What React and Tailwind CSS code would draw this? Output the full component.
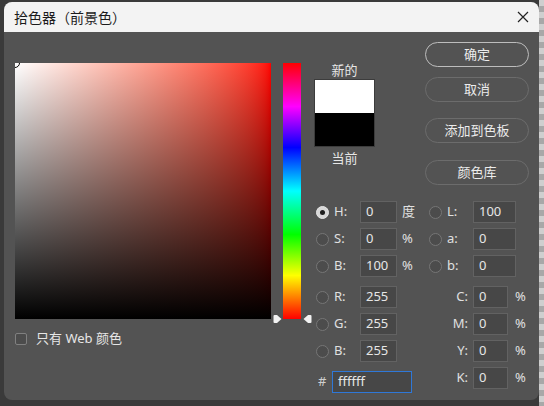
import React from 'react';

const font = { fontFamily: '"Noto Sans", "Noto Sans CJK SC", sans-serif' };

const Radio = ({ checked }) => (
  <div
    className={`w-[13px] h-[13px] rounded-full shrink-0 flex items-center justify-center border ${
      checked ? 'bg-[#d8d8d8] border-[#e6e6e6]' : 'bg-[#4c4c4c] border-[#767676]'
    }`}
  >
    {checked && <div className="w-[5px] h-[5px] rounded-full bg-[#1e1e1e]" />}
  </div>
);

const Field = ({ value, w = 'w-[37px]', blue }) => (
  <div
    className={`${w} h-[22px] shrink-0 flex items-center pl-[5px] text-[13px] text-[#e6e6e6] bg-[#474747] border ${
      blue ? 'border-[#2f78d8]' : 'border-[#626262]'
    }`}
  >
    {value}
  </div>
);

const LeftRow = ({ label, value, unit, checked }) => (
  <div className="h-[22px] flex items-center">
    <div className="ml-[2px]">
      <Radio checked={checked} />
    </div>
    <span className="ml-[5px] w-[26px] text-[13px] text-[#e0e0e0]">{label}</span>
    <Field value={value} />
    {unit && <span className="ml-[5px] text-[13px] text-[#e0e0e0]">{unit}</span>}
  </div>
);

const LabRow = ({ label, value }) => (
  <div className="h-[22px] flex items-center">
    <div className="ml-[2px]">
      <Radio />
    </div>
    <span className="ml-[5px] w-[26px] text-[13px] text-[#e0e0e0]">{label}</span>
    <Field value={value} w="w-[43px]" />
  </div>
);

const CmykRow = ({ label, value }) => (
  <div className="h-[22px] flex items-center">
    <span className="w-[41px] text-right text-[13px] text-[#e0e0e0]">{label}</span>
    <div className="ml-[5px]">
      <Field value={value} w="w-[35px]" />
    </div>
    <span className="ml-[7px] text-[13px] text-[#e0e0e0]">%</span>
  </div>
);

const Btn = ({ children, primary, className = '' }) => (
  <div
    className={`h-[25px] w-[104px] rounded-full flex items-center justify-center text-[13px] text-[#ececec] ${
      primary ? 'border-[1.5px] border-[#bdbdbd]' : 'border border-[#6c6c6c]'
    } ${className}`}
  >
    {children}
  </div>
);

const Arrow = ({ dir }) => (
  <svg width="9" height="10" viewBox="0 0 9 10">
    {dir === 'right' ? (
      <path d="M1.5 1 L4 1 L8.5 5 L4 9 L1.5 9 Q0.5 9 0.5 8 L0.5 2 Q0.5 1 1.5 1 Z" fill="#f2f2f2" />
    ) : (
      <path d="M7.5 1 L5 1 L0.5 5 L5 9 L7.5 9 Q8.5 9 8.5 8 L8.5 2 Q8.5 1 7.5 1 Z" fill="#f2f2f2" />
    )}
  </svg>
);

export default function App() {
  return (
    <div className="w-[544px] h-[406px] bg-[#3a3a3a] flex relative overflow-hidden" style={font}>
      <div className="absolute right-0 top-0 w-[5px] h-full bg-[repeating-linear-gradient(to_bottom,#cfcfcf_0px,#cfcfcf_6px,#a8a8a8_6px,#a8a8a8_12px)]" />
      <div className="ml-[4px] mt-[2px] w-[535px] h-[398px] rounded-lg overflow-hidden bg-[#535353] flex flex-col relative">
        {/* title bar */}
        <div className="h-[30px] bg-[#f3f3f3] flex items-center justify-between pl-[10px] pr-[10px] shrink-0">
          <span className="text-[14px] text-[#1b1b1b]">拾色器（前景色）</span>
          <svg width="12" height="12" viewBox="0 0 12 12">
            <path d="M1 1 L11 11 M11 1 L1 11" stroke="#222" strokeWidth="1.2" />
          </svg>
        </div>

        {/* body */}
        <div className="flex items-start pt-[10px] pl-[11px]">
          {/* color field */}
          <div className="mt-[21px] flex flex-col">
            <div className="w-[256px] h-[256px] bg-linear-to-r from-white to-[#ff0000] relative overflow-hidden">
              <div className="absolute inset-0 bg-linear-to-t from-black to-transparent" />
              <div className="absolute -left-[5px] -top-[5px] w-[10px] h-[10px] rounded-full border-[1.5px] border-black" />
            </div>
            <div className="mt-[13px] h-[14px] flex items-center">
              <div className="w-[12px] h-[12px] rounded-[2px] border border-[#808080] bg-[#4c4c4c]" />
              <span className="ml-[9px] text-[13px] text-[#e6e6e6]">只有 Web 颜色</span>
            </div>
          </div>

          {/* hue slider */}
          <div className="ml-[12px] mt-[21px] w-[18px] h-[256px] relative bg-[linear-gradient(to_bottom,#ff0000,#ff00ff_17%,#0000ff_33%,#00ffff_50%,#00ff00_67%,#ffff00_83%,#ff0000)]">
            <div className="absolute -left-[10px] bottom-[-5px]">
              <Arrow dir="right" />
            </div>
            <div className="absolute -right-[11px] bottom-[-5px]">
              <Arrow dir="left" />
            </div>
          </div>

          {/* right area */}
          <div className="ml-[13px] w-[215px] flex flex-col">
            <div className="h-[159px] flex items-start">
              <div className="mt-[21px] w-[61px] flex flex-col items-center">
                <div className="h-[14px] leading-[14px] text-[13px] text-[#e6e6e6]">新的</div>
                <div className="mt-[2px] w-[61px] h-[68px] border border-[#3c3c3c] flex flex-col">
                  <div className="flex-1 bg-white" />
                  <div className="flex-1 bg-black" />
                </div>
                <div className="mt-[4px] h-[14px] leading-[14px] text-[13px] text-[#e6e6e6]">当前</div>
              </div>
              <div className="ml-[50px] flex flex-col">
                <Btn primary>确定</Btn>
                <Btn className="mt-[10px]">取消</Btn>
                <Btn className="mt-[16px]">添加到色板</Btn>
                <Btn className="mt-[17px]">颜色库</Btn>
              </div>
            </div>

            <div className="flex">
              <div className="w-[113px] flex flex-col">
                <div className="flex flex-col gap-[5px]">
                  <LeftRow label="H:" value="0" unit="度" checked />
                  <LeftRow label="S:" value="0" unit="%" />
                  <LeftRow label="B:" value="100" unit="%" />
                </div>
                <div className="mt-[9px] flex flex-col gap-[5px]">
                  <LeftRow label="R:" value="255" />
                  <LeftRow label="G:" value="255" />
                  <LeftRow label="B:" value="255" />
                </div>
                <div className="mt-[9px] h-[22px] flex items-center">
                  <span className="ml-[4px] w-[14px] text-[13px] text-[#cfcfcf]">#</span>
                  <Field value="ffffff" w="w-[80px]" blue />
                </div>
              </div>
              <div className="flex flex-col">
                <div className="flex flex-col gap-[5px]">
                  <LabRow label="L:" value="100" />
                  <LabRow label="a:" value="0" />
                  <LabRow label="b:" value="0" />
                </div>
                <div className="mt-[9px] flex flex-col gap-[5px]">
                  <CmykRow label="C:" value="0" />
                  <CmykRow label="M:" value="0" />
                  <CmykRow label="Y:" value="0" />
                  <CmykRow label="K:" value="0" />
                </div>
              </div>
            </div>
          </div>
        </div>
      </div>
    </div>
  );
}
